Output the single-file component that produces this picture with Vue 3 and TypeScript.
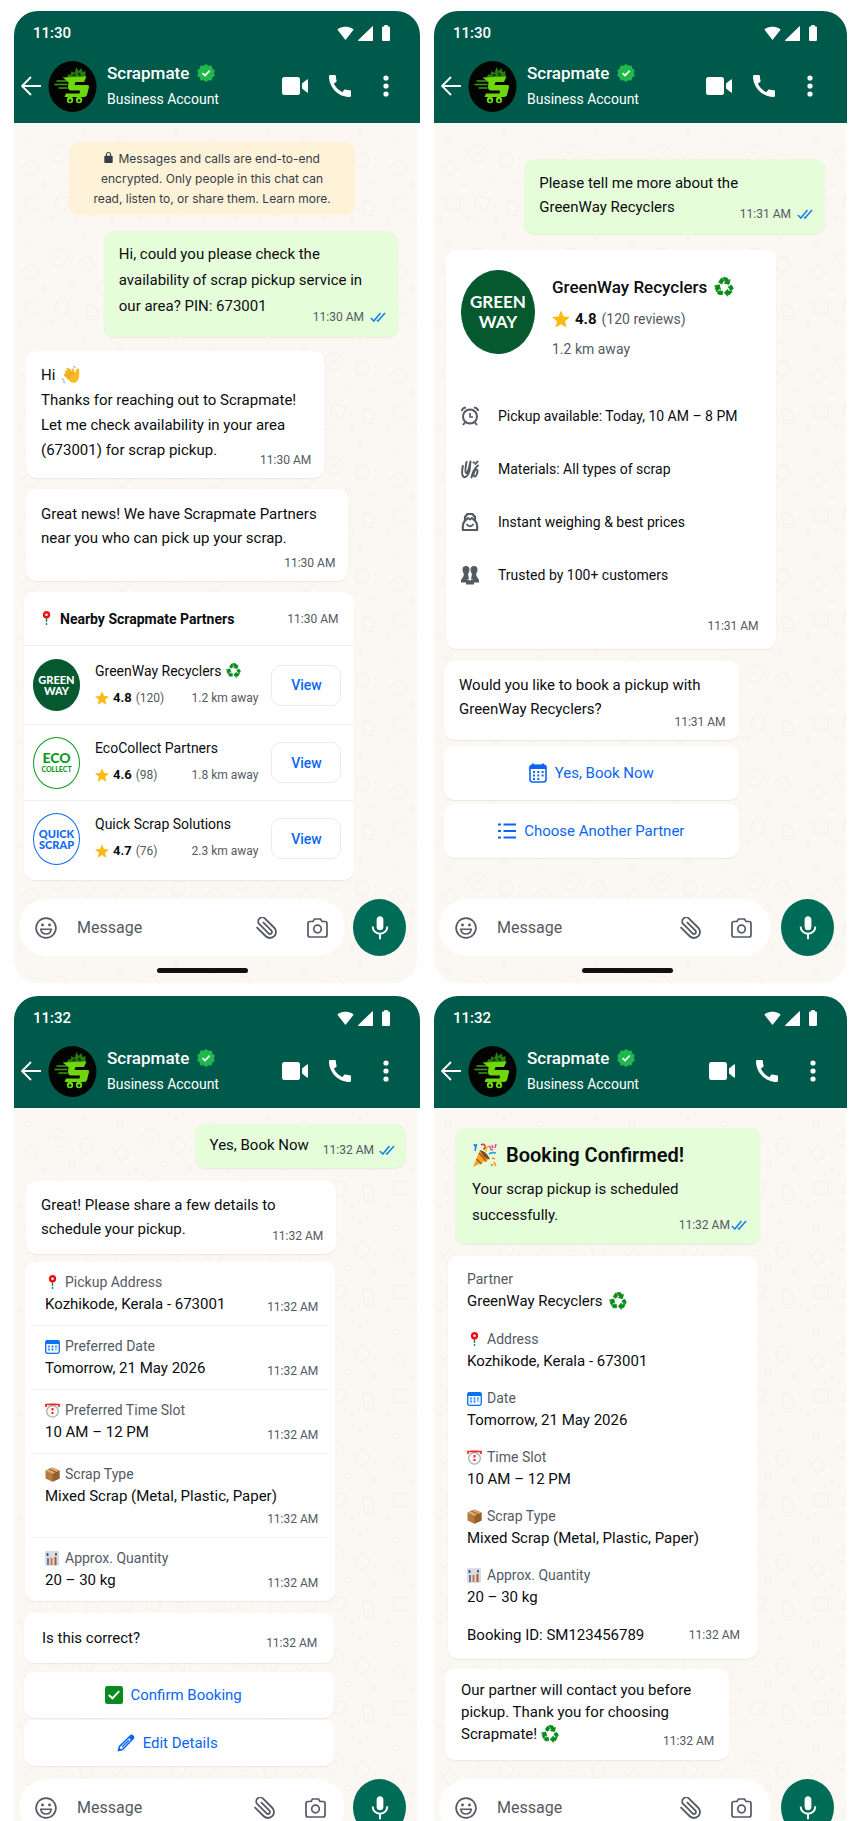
<script setup lang="ts">
interface Phone {
  id: string
  clock: string
}

interface Partner {
  name: string
  logo: string[]
  tone: string
  eco: boolean
  rating: string
  reviews: number
  distance: string
}

interface Field {
  icon: string
  label: string
  shortLabel: string
  value: string
  tall?: boolean
}

const phones: Phone[] = [
  { id: 'availability', clock: '11:30' },
  { id: 'partner', clock: '11:30' },
  { id: 'details', clock: '11:32' },
  { id: 'confirmed', clock: '11:32' },
]

const partners: Partner[] = [
  { name: 'GreenWay Recyclers', logo: ['GREEN', 'WAY'], tone: 'greenway', eco: true, rating: '4.8', reviews: 120, distance: '1.2 km away' },
  { name: 'EcoCollect Partners', logo: ['ECO', 'COLLECT'], tone: 'ecocollect', eco: false, rating: '4.6', reviews: 98, distance: '1.8 km away' },
  { name: 'Quick Scrap Solutions', logo: ['QUICK', 'SCRAP'], tone: 'quickscrap', eco: false, rating: '4.7', reviews: 76, distance: '2.3 km away' },
]

const features = [
  { icon: 'clock', text: 'Pickup available: Today, 10 AM – 8 PM' },
  { icon: 'materials', text: 'Materials: All types of scrap' },
  { icon: 'weigh', text: 'Instant weighing & best prices' },
  { icon: 'people', text: 'Trusted by 100+ customers' },
]

const fields: Field[] = [
  { icon: 'pin', label: 'Pickup Address', shortLabel: 'Address', value: 'Kozhikode, Kerala - 673001' },
  { icon: 'date', label: 'Preferred Date', shortLabel: 'Date', value: 'Tomorrow, 21 May 2026' },
  { icon: 'alarm', label: 'Preferred Time Slot', shortLabel: 'Time Slot', value: '10 AM – 12 PM' },
  { icon: 'box', label: 'Scrap Type', shortLabel: 'Scrap Type', value: 'Mixed Scrap (Metal, Plastic, Paper)', tall: true },
  { icon: 'chart', label: 'Approx. Quantity', shortLabel: 'Approx. Quantity', value: '20 – 30 kg' },
]
</script>

<template>
  <svg class="sprite" aria-hidden="true">
    <defs>
      <pattern id="doodles" width="92" height="104" patternUnits="userSpaceOnUse">
        <g fill="none" stroke="#f6f0ea" stroke-width="1">
          <circle cx="14" cy="16" r="3" /><circle cx="70" cy="10" r="2" /><circle cx="44" cy="30" r="9" />
          <path d="M40 28l3 3 5-4M8 44l10-6 6 8-9 7zM66 34q8-8 12 0t-6 12q-8-4-6-12z" />
          <circle cx="30" cy="62" r="2" /><circle cx="58" cy="56" r="3" /><circle cx="84" cy="60" r="2" />
          <path d="M12 74h14v12H12zM44 72l12 4-4 12-12-4zM72 78q10-2 12 8t-10 6z" />
          <circle cx="36" cy="96" r="3" /><circle cx="62" cy="98" r="2" /><circle cx="6" cy="98" r="2" />
        </g>
      </pattern>
      <symbol id="wifi" viewBox="0 3 24 19"><path fill="currentColor" d="M12 21.5 23.6 7C23.2 6.7 18.7 3 12 3S.8 6.7.4 7z" /></symbol>
      <symbol id="signal" viewBox="2 2 20 20"><path fill="currentColor" d="M3 22h18q1 0 1-1V3q0-1.500-1-.5L2.400 20.600Q1.500 22 3 22z" /></symbol>
      <symbol id="battery" viewBox="7 2 10 20"><path fill="currentColor" d="M15.500 4H14.500Q14.500 2 13.500 2h-3Q9.500 2 9.500 4h-1Q7 4 7 5.500v15Q7 22 8.500 22h7q1.500 0 1.500-1.500v-15Q17 4 15.500 4z" /></symbol>
      <symbol id="back" viewBox="0 0 20 20"><path d="M10 1 1 10l9 9M1 10h19" fill="none" stroke="currentColor" stroke-width="1.800" /></symbol>
      <symbol id="logo" viewBox="0 0 48 51">
        <ellipse cx="24" cy="25.500" rx="24" ry="25.500" fill="#020402" />
        <path d="M18 17l2-4 2 1 1-4 3 2 2-6 2 4 3-3 1 4 3-1v7z" fill="#2b7a0e" />
        <path d="M24 14h3m3-2 2 3" stroke="#0a2604" stroke-width="1.500" />
        <path d="M8 20h12M6 23.500h13M10 27h9" stroke="#3c9a12" stroke-width="1.600" />
        <path d="M14 16.500 38 15.500 35.500 21H27l-1 3h13q2 0 1.500 2l-2 8q-.5 2-3 2H16l1.500-3.500H31l.5-3H23q-3.500 0-3.500-3.500L20 21z" fill="#6fd80c" />
        <circle cx="21.500" cy="39" r="3.200" fill="#6fd80c" /><circle cx="30.500" cy="39" r="3.200" fill="#6fd80c" />
        <circle cx="21.500" cy="39.500" r="1.200" fill="#020402" /><circle cx="30.500" cy="39.500" r="1.200" fill="#020402" />
      </symbol>
      <symbol id="verified" viewBox="0 0 18 18">
        <path fill="#1fb84a" d="M9 0l2.500 1.700 3-.1 .9 2.900L17.800 6.300 16.900 9l.9 2.700-2.400 1.800-.9 2.900-3-.1L9 18l-2.500-1.700-3 .1-.9-2.900L.2 11.700 1.100 9 .2 6.300l2.400-1.800.9-2.900 3 .1z" />
        <path d="M5.500 9.200 8 11.500 12.700 6.700" fill="none" stroke="#fff" stroke-width="1.700" />
      </symbol>
      <symbol id="video" viewBox="0 0 26 18"><rect width="18" height="18" rx="2.500" fill="currentColor" /><path fill="currentColor" d="M20 6.500 25 2.500q1-.5 1 .5v12q0 1-1 .5l-5-4z" /></symbol>
      <symbol id="call" viewBox="3 3 18 18"><path fill="currentColor" d="M20.010 15.380c-1.230 0-2.420-.2-3.530-.56-.35-.12-.74-.03-1.010.24l-1.570 1.970c-2.830-1.350-5.480-3.900-6.890-6.830l1.950-1.660c.27-.28.35-.67.24-1.020-.37-1.110-.56-2.300-.56-3.530 0-.54-.45-.99-.99-.99H4.190C3.650 3 3 3.240 3 3.990 3 13.280 10.730 21 20.010 21c.71 0 .99-.63.99-1.180v-3.450c0-.54-.45-.99-.99-.99z" /></symbol>
      <symbol id="more" viewBox="0 0 6 22"><g fill="currentColor"><circle cx="3" cy="3" r="2.600" /><circle cx="3" cy="11" r="2.600" /><circle cx="3" cy="19" r="2.600" /></g></symbol>
      <symbol id="lock" viewBox="4 1 16 21"><path fill="currentColor" d="M18 8h-1V6c0-2.760-2.240-5-5-5S7 3.240 7 6v2H6c-1.100 0-2 .9-2 2v10c0 1.100.9 2 2 2h12c1.100 0 2-.9 2-2V10c0-1.100-.9-2-2-2zM9 8V6c0-1.660 1.340-3 3-3s3 1.340 3 3v2z" /></symbol>
      <symbol id="ticks" viewBox="0 0 16 10"><path d="M.8 6 3.800 9 10.500 1M7 8 8 9 15 1" fill="none" stroke="#1686e0" stroke-width="1.600" /></symbol>
      <symbol id="recycle" viewBox="0.500 1.500 22.500 22">
        <path fill="#0a8a17" stroke="#0a8a17" stroke-width=".9" d="M5.770 7.150 7.200 4.780l1.030-1.710c.39-.65 1.330-.65 1.720 0l1.480 2.460-1.230 2.060-1 1.620-3.430-2.060zm15.950 5.820-1.600-2.660-3.460 2L18.870 16H20c.76 0 1.450-.43 1.790-1.110.14-.28.21-.58.21-.89 0-.36-.1-.71-.28-1.030zM16 21h1.500c.76 0 1.450-.43 1.790-1.110L20.740 17H16v-2l-4 4 4 4v-2zm-6-4H5.700l-.84 1.410c-.3.5-.32 1.120-.06 1.650.28.57.87.94 1.520.94H10v-4zm-3.880-2.650 1.730 1.040L6.480 9.900 1 11.270l1.700 1.020-.41.69c-.35.59-.38 1.310-.07 1.920l1.630 3.260 2.270-3.810zm10.900-9.210-1.300-2.170C15.350 2.370 14.700 2 14 2h-3.530l3.120 5.200-1.720 1.030 5.490 1.370 1.370-5.490-1.710 1.030z" />
      </symbol>
      <symbol id="star" viewBox="2 2 20 19"><path fill="#fdb913" d="M12 17.300 18.200 21l-1.700-7L22 9.200l-7.200-.6L12 2 9.200 8.600 2 9.200 7.500 14l-1.700 7z" /></symbol>
      <symbol id="pin" viewBox="0 0 15 15"><path d="M7.500 7v8" stroke="#178a4c" stroke-width="1.400" stroke-dasharray="4 1 2 1" /><circle cx="7.500" cy="3.700" r="2.500" fill="#fff" stroke="#ee1111" stroke-width="2.400" /></symbol>
      <symbol id="wave" viewBox="0 0 18 18">
        <path fill="#fbb924" d="M3 6.500q-.8-1.400.3-1.900t1.900.6L4.600 3.600q-.5-1.400.6-1.800t1.900.8l3 4.200L9.400 3.700q0-1.300 1-1.300t1.300 1.200L13 7l1.500-3.500q.7-1.300 1.800-.8t1 2L17 11q-.2 3.500-3.200 5.200t-6-1L2 9.700q-.9-1.100 0-1.800t2 .2z" />
        <path d="M5 5.500 9 10M3.800 8l4 4M7 3l4 5.500" stroke="#d8860a" stroke-width=".7" fill="none" />
        <path d="M11 .5q2 0 2.500 1.500M.5 12q0 2.500 2.500 3.500M1 15.500 3 17.500" stroke="#7bb0d0" fill="none" />
      </symbol>
      <symbol id="party" viewBox="0 0 25 25">
        <path d="M1 24 8 7l10 9z" fill="#f4a62a" /><path d="M4.500 16l5 5M7 10l7.500 8.500" stroke="#b35a12" stroke-width="1.600" />
        <path d="M8 7q6 1 10 9-6 1-10-9z" fill="#7d4b22" />
        <path d="M2 1l2 4M4.500 1 3 8" stroke="#2b7de0" stroke-width="1.600" /><path d="M9 2q3-2 4 1t-2 3" stroke="#e0344b" stroke-width="1.600" fill="none" />
        <path d="M17 11q3-2 7-1" stroke="#27a8e0" stroke-width="1.800" fill="none" /><path d="M14 9q-1-4 3-6" stroke="#f1c40f" stroke-width="1.500" fill="none" />
        <path d="M17 3l2 2M20 2l1 3M24 1l-1 4M18 6l3 1" stroke="#e83f9b" stroke-width="1.500" /><path d="M20 15l3 1M22 19l2 4M19 21l2 2" stroke="#f08c1e" stroke-width="1.500" />
      </symbol>
      <symbol id="date" viewBox="0 0 15 15"><rect x=".7" y="1.700" width="13.600" height="12.600" rx="1.800" fill="#eef5ff" stroke="#0b73ee" stroke-width="1.300" /><path d="M.5 5V3Q.5 1 2.500 1h10q2 0 2 2v2z" fill="#0b73ee" /><path d="M4 6.500v6M7.500 6.500v6M11 6.500v4" stroke="#0b73ee" stroke-width="1.400" stroke-dasharray="2 1" /></symbol>
      <symbol id="alarm" viewBox="0 0 15 15"><circle cx="7.500" cy="8.300" r="5.800" fill="#fbfbfc" stroke="#a9aeb6" stroke-width="1.300" /><path d="M1 4V1.500h3M14 4V1.500h-3M4 1.300h7" stroke="#ef2626" stroke-width="1.700" fill="none" /><path d="M7.500 5v2.400M7.500 9v2" stroke="#ee1717" stroke-width="1.900" /></symbol>
      <symbol id="box" viewBox="0 0 15 15"><path d="M7.500.5 14.500 3.500v8l-7 3.200-7-3.200v-8z" fill="#b67a3e" /><path d="M7.500.5 14.500 3.500 7.500 7 .5 3.500z" fill="#dcaa6d" /><path d="M7.500 7v7.700l7-3.200v-8z" fill="#94602f" /><path d="M4 2l7 3.200v2" stroke="#8a5527" fill="none" /></symbol>
      <symbol id="chart" viewBox="0 0 15 15"><rect width="14" height="15" rx="1" fill="#d9dde3" /><path d="M2.500 2v3M11 2v2.500" stroke="#47525f" stroke-width="1.800" /><path d="M3 14V7" stroke="#5d7fa8" stroke-width="2" /><path d="M6.500 14V7" stroke="#e0702c" stroke-width="2" /><path d="M10.500 14V6" stroke="#a85a3e" stroke-width="2" /></symbol>
      <symbol id="clock" viewBox="0 0 18 20"><g fill="none" stroke="currentColor"><circle cx="9" cy="10.500" r="7" stroke-width="2" /><path d="M9 7v4h3" stroke-width="1.700" /><path d="M1 5q0-3 4-3.500M17 5q0-3-4-3.500M4 16.500 2 19M14 16.500l2 2.500" stroke-width="2" /></g></symbol>
      <symbol id="materials" viewBox="0 0 18 20"><g fill="none" stroke="currentColor" stroke-width="2" stroke-linecap="round"><path d="M1.800 7Q0 17 3 18t5.500-6L9.500 2.500M5.500 3q-2 10-.3 11t4.300-11.500M10.500 18.500q1.500-8 6.500-12M12.500 3.500h.6M16.500 2.500l-2 2.500" /><ellipse cx="14.500" cy="14" rx="1.600" ry="3.600" transform="rotate(18 14.500 14)" /></g></symbol>
      <symbol id="weigh" viewBox="0 0 18 20"><path d="M2 18q-1-6 2-9.500V5l2.500-3h5L14 5v3.500q3 3.500 2 9.500z" fill="none" stroke="currentColor" stroke-width="2.200" stroke-linejoin="round" /><path d="M4.500 8.500 7 6l2 1.500L11 6l2.500 2.500M5.500 12q3.500 4.500 7 0" fill="none" stroke="currentColor" stroke-width="1.800" /></symbol>
      <symbol id="people" viewBox="0 0 18 20"><g fill="currentColor"><path d="M1.500 4.500Q1.500 1 5 1t3.500 3.500Q8.500 7.500 7 9l1 5H6.500v3.500H0V15l2.300-3.500.7-2.500Q1.500 7.500 1.500 4.500z" /><path d="M16.500 4.500Q16.500 1 13 1T9.500 4.500Q9.500 7.500 11 9l-1 5h1.500v3.500H18V15l-2.300-3.500L15 9q1.500-1.500 1.500-4.500z" /><path d="M5 19.500v-4l3-1 1 1.500 1-1.500 3 1v4z" /></g></symbol>
      <symbol id="calendar" viewBox="0 0 18 20"><rect x="1" y="2.500" width="16" height="16.500" rx="2.500" fill="none" stroke="currentColor" stroke-width="1.600" /><path d="M.5 6V4q0-2.500 2.500-2.500V.5h2v1h8v-1h2v1q2.500 0 2.500 2.500v2z" fill="currentColor" /><path d="M4 9h11M4 12.500h11M4 16h8" stroke="currentColor" stroke-width="2" stroke-dasharray="2 2.300" /></symbol>
      <symbol id="list" viewBox="0 0 18 16"><path d="M0 1.500h3M0 8h3M0 14.500h3M5.500 1.500H18M5.500 8H18M5.500 14.500H18" stroke="currentColor" stroke-width="2.200" /></symbol>
      <symbol id="check" viewBox="0 0 19 19"><rect width="19" height="19" rx="2.500" fill="#0c8a22" /><path d="M4 9.500 7.800 13 15 5.500" fill="none" stroke="#fff" stroke-width="2" /></symbol>
      <symbol id="pencil" viewBox="0 0 18 18"><path d="M1.500 16.500 2.500 12.500 13.500 1.700q1-1 2.300.4t.4 2.400L5.500 15.500z" fill="none" stroke="currentColor" stroke-width="1.500" /><path d="M5 13 12 6" fill="none" stroke="currentColor" stroke-width="1.200" /><path fill="currentColor" d="M11.500 3.500 13.500 1.500q1-.8 2.400.5t.5 2.500l-2 2zM1 17l1-3.500L4.500 16z" /></symbol>
      <symbol id="smile" viewBox="0 0 22 22"><circle cx="11" cy="11" r="9.900" fill="none" stroke="currentColor" stroke-width="1.700" /><circle cx="7.500" cy="8" r="1.400" fill="currentColor" /><circle cx="14.500" cy="8" r="1.400" fill="currentColor" /><path d="M5.800 12.300h10.400q-.8 4.700-5.200 4.700t-5.200-4.700z" fill="none" stroke="currentColor" stroke-width="1.600" /></symbol>
      <symbol id="clip" viewBox="1 1 22 22"><path transform="matrix(-1 0 0 1 24 0)" d="M21.440 11.050l-9.190 9.190a6 6 0 0 1-8.490-8.490l9.190-9.190a4 4 0 0 1 5.660 5.660l-9.200 9.190a2 2 0 0 1-2.830-2.830l8.490-8.480" fill="none" stroke="currentColor" stroke-width="1.800" /></symbol>
      <symbol id="camera" viewBox="0 0 21 20"><path d="M3 3.500h3l1.500-2.500h6L15 3.500h3q2 0 2 2v11.500q0 2-2 2H3q-2 0-2-2V5.500q0-2 2-2z" fill="none" stroke="currentColor" stroke-width="1.700" /><circle cx="10.500" cy="11" r="3.800" fill="none" stroke="currentColor" stroke-width="1.700" /></symbol>
      <symbol id="mic" viewBox="4 1 16 21"><path fill="currentColor" d="M12 14c1.660 0 3-1.340 3-3V4.500c0-1.660-1.340-3-3-3s-3 1.340-3 3V11c0 1.660 1.340 3 3 3z" /><path d="M5.500 10.500c0 3.800 2.700 6.500 6.500 6.500s6.500-2.700 6.500-6.500M12 17v5" fill="none" stroke="currentColor" stroke-width="1.700" /></symbol>
    </defs>
  </svg>

  <div class="board">
    <section v-for="phone in phones" :key="phone.id" class="phone" :class="phone.id">
      <header class="top">
        <div class="status">
          <time>{{ phone.clock }}</time>
          <span class="status-icons">
            <svg class="wifi"><use href="#wifi" /></svg>
            <svg class="signal"><use href="#signal" /></svg>
            <svg class="battery"><use href="#battery" /></svg>
          </span>
        </div>
        <div class="toolbar">
          <button class="icon-btn" type="button" aria-label="Back"><svg class="i20"><use href="#back" /></svg></button>
          <svg class="avatar"><use href="#logo" /></svg>
          <div class="who">
            <h2>Scrapmate <svg class="i18"><use href="#verified" /></svg></h2>
            <p>Business Account</p>
          </div>
          <button class="icon-btn" type="button" aria-label="Video call"><svg class="video"><use href="#video" /></svg></button>
          <button class="icon-btn call" type="button" aria-label="Call"><svg class="i22"><use href="#call" /></svg></button>
          <button class="icon-btn" type="button" aria-label="More options"><svg class="more"><use href="#more" /></svg></button>
        </div>
      </header>

      <div class="body">
        <svg class="wallpaper" aria-hidden="true"><rect width="100%" height="100%" fill="url(#doodles)" /></svg>

        <main class="chat">
          <template v-if="phone.id === 'availability'">
            <p class="notice">
              <svg class="lock"><use href="#lock" /></svg> Messages and calls are end-to-end<br />encrypted. Only people in this chat can<br />read, listen to, or share them. Learn more.
            </p>
            <div class="bubble out ask">
              <p>Hi, could you please check the<br />availability of scrap pickup service in<br />our area? PIN: 673001</p>
              <span class="meta">11:30 AM <svg class="ticks"><use href="#ticks" /></svg></span>
            </div>
            <div class="bubble hello">
              <p>Hi <svg class="i18 emoji hand"><use href="#wave" /></svg><br />Thanks for reaching out to Scrapmate!<br />Let me check availability in your area<br />(673001) for scrap pickup.</p>
              <span class="meta">11:30 AM</span>
            </div>
            <div class="bubble news">
              <p>Great news! We have Scrapmate Partners<br />near you who can pick up your scrap.</p>
              <span class="meta">11:30 AM</span>
            </div>
            <div class="card nearby">
              <div class="nearby-head">
                <svg class="i15"><use href="#pin" /></svg>
                <h3>Nearby Scrapmate Partners</h3>
                <span class="meta">11:30 AM</span>
              </div>
              <ul>
                <li v-for="p in partners" :key="p.name">
                  <span class="brand" :class="p.tone"><b v-for="line in p.logo" :key="line">{{ line }}</b></span>
                  <div class="info">
                    <h4>{{ p.name }} <svg v-if="p.eco" class="i15"><use href="#recycle" /></svg></h4>
                    <p><svg class="star"><use href="#star" /></svg><b>{{ p.rating }}</b> ({{ p.reviews }})<span class="distance">{{ p.distance }}</span></p>
                  </div>
                  <button type="button" class="view">View</button>
                </li>
              </ul>
            </div>
          </template>

          <template v-else-if="phone.id === 'partner'">
            <div class="bubble out tell">
              <p>Please tell me more about the<br />GreenWay Recyclers</p>
              <span class="meta">11:31 AM <svg class="ticks"><use href="#ticks" /></svg></span>
            </div>
            <div class="card profile">
              <div class="profile-head">
                <span class="brand greenway large"><b>GREEN</b><b>WAY</b></span>
                <div>
                  <h3>GreenWay Recyclers <svg class="i20"><use href="#recycle" /></svg></h3>
                  <p><svg class="i18"><use href="#star" /></svg><b>4.8</b> (120 reviews)</p>
                  <p>1.2 km away</p>
                </div>
              </div>
              <ul>
                <li v-for="f in features" :key="f.icon"><svg class="feature"><use :href="'#' + f.icon" /></svg>{{ f.text }}</li>
              </ul>
              <span class="meta">11:31 AM</span>
            </div>
            <div class="bubble would">
              <p>Would you like to book a pickup with<br />GreenWay Recyclers?</p>
              <span class="meta">11:31 AM</span>
            </div>
            <button type="button" class="reply"><svg class="calendar"><use href="#calendar" /></svg>Yes, Book Now</button>
            <button type="button" class="reply"><svg class="i18"><use href="#list" /></svg>Choose Another Partner</button>
          </template>

          <template v-else-if="phone.id === 'details'">
            <div class="bubble out yes">
              <p>Yes, Book Now</p>
              <span class="meta">11:32 AM <svg class="ticks"><use href="#ticks" /></svg></span>
            </div>
            <div class="bubble share">
              <p>Great! Please share a few details to<br />schedule your pickup.</p>
              <span class="meta">11:32 AM</span>
            </div>
            <dl class="card form">
              <div v-for="f in fields" :key="f.icon" :class="{ tall: f.tall }">
                <dt><svg class="i15"><use :href="'#' + f.icon" /></svg>{{ f.label }}</dt>
                <dd>{{ f.value }}</dd>
                <dd class="meta">11:32 AM</dd>
              </div>
            </dl>
            <div class="bubble correct">
              <p>Is this correct?</p>
              <span class="meta">11:32 AM</span>
            </div>
            <button type="button" class="reply"><svg class="i18"><use href="#check" /></svg>Confirm Booking</button>
            <button type="button" class="reply edit"><svg class="i18"><use href="#pencil" /></svg>Edit Details</button>
          </template>

          <template v-else>
            <div class="bubble out done">
              <div>
                <h3><svg class="party"><use href="#party" /></svg>Booking Confirmed!</h3>
                <p>Your scrap pickup is scheduled<br />successfully.</p>
              </div>
              <span class="meta tight">11:32 AM<svg class="ticks"><use href="#ticks" /></svg></span>
            </div>
            <div class="card summary">
              <dl>
                <div>
                  <dt>Partner</dt>
                  <dd>GreenWay Recyclers <svg class="i18"><use href="#recycle" /></svg></dd>
                </div>
                <div v-for="f in fields" :key="f.icon">
                  <dt><svg class="i15"><use :href="'#' + f.icon" /></svg>{{ f.shortLabel }}</dt>
                  <dd>{{ f.value }}</dd>
                </div>
              </dl>
              <p class="booking">Booking ID: SM123456789<span class="meta">11:32 AM</span></p>
            </div>
            <div class="bubble thanks">
              <p>Our partner will contact you before<br />pickup. Thank you for choosing<br />Scrapmate! <svg class="i18 emoji"><use href="#recycle" /></svg></p>
              <span class="meta">11:32 AM</span>
            </div>
          </template>
        </main>

        <form class="composer" @submit.prevent>
          <div class="field">
            <button class="icon-btn" type="button" aria-label="Emoji"><svg class="i22"><use href="#smile" /></svg></button>
            <input type="text" placeholder="Message" aria-label="Message" />
            <button class="icon-btn" type="button" aria-label="Attach"><svg class="i22"><use href="#clip" /></svg></button>
            <button class="icon-btn" type="button" aria-label="Camera"><svg class="camera"><use href="#camera" /></svg></button>
          </div>
          <button class="mic" type="button" aria-label="Record voice message"><svg><use href="#mic" /></svg></button>
        </form>
        <div class="home"></div>
      </div>
    </section>
  </div>
</template>

<style>
body {
  background: #fefefe;
}
</style>

<style scoped>
* {
  box-sizing: border-box;
  margin: 0;
  padding: 0;
}

.sprite {
  position: absolute;
  width: 0;
  height: 0;
}

.board {
  display: grid;
  grid-template-columns: 58fr 59fr;
  gap: 13px 14px;
  padding: 11px 17px 0 14px;
  max-height: 100vh;
  overflow: hidden;
  font: 450 15px/24px Roboto, "Liberation Sans", sans-serif;
  color: #0b0d0f;
}

.phone {
  display: flex;
  flex-direction: column;
  min-width: 0;
}

button,
input {
  font: inherit;
  border: 0;
  background: none;
}

ul {
  list-style: none;
}

svg {
  flex: none;
}

.i15 { width: 15px; height: 15px; }
.i18 { width: 18px; height: 18px; }
.i20 { width: 20px; height: 20px; }
.i22 { width: 22px; height: 22px; }

/* Header */
.top {
  height: 112px;
  border-radius: 24px 24px 0 0;
  background: #005a4b;
  color: #fff;
}

.status {
  display: flex;
  justify-content: space-between;
  align-items: center;
  height: 44px;
  padding: 0 29px 0 19px;
  font-size: 15px;
  font-weight: 500;
}

.status-icons {
  display: flex;
  align-items: center;
  gap: 4px;
}

.wifi { width: 17px; height: 15px; }
.signal { width: 15px; height: 15px; }
.battery { width: 10px; height: 16px; margin-left: 4px; }

.toolbar {
  display: flex;
  align-items: center;
  height: 62px;
  padding: 0 31px 0 7px;
}

.partner .toolbar {
  padding-right: 34px;
}

.icon-btn {
  display: flex;
  color: inherit;
}

.avatar {
  width: 49px;
  height: 51px;
  margin-left: 7px;
}

.who {
  flex: 1;
  margin-left: 10px;
}

.who h2 {
  display: flex;
  align-items: center;
  gap: 8px;
  font-size: 17px;
  font-weight: 500;
  line-height: 26px;
}

.who p {
  font-size: 14px;
  line-height: 26px;
}

.video { width: 26px; height: 18px; }
.call { margin: 0 32px 0 21px; }
.more { width: 6px; height: 22px; }

/* Conversation */
.body {
  position: relative;
  flex: 1;
  display: flex;
  flex-direction: column;
  margin-right: 3px;
  overflow: hidden;
  border-radius: 0 0 24px 24px;
  background: #fbf8f4;
}

.partner .body,
.confirmed .body {
  margin-right: 1px;
}

.wallpaper {
  position: absolute;
  inset: 0;
  width: 100%;
  height: 100%;
}

.chat {
  position: relative;
  flex: 1;
  display: flex;
  flex-direction: column;
  align-items: flex-start;
}

.notice {
  width: 71%;
  margin: 19px 0 0 55px;
  padding: 7px 0 6px;
  border-radius: 9px;
  background: #fef2d8;
  color: #373d45;
  font: 400 12px/20px Inter, Roboto, sans-serif;
  text-align: center;
}

.lock {
  width: 9px;
  height: 11px;
  margin-right: 2px;
}

.bubble,
.card,
.reply {
  border-radius: 10px;
  background: #fff;
  box-shadow: 0 1px 1px #ece7e1;
}

.bubble {
  display: grid;
  margin-left: 12px;
  padding: 12px 13px 10px 15px;
}

.bubble > * {
  grid-area: 1 / 1;
}

.meta {
  align-self: end;
  justify-self: end;
  display: flex;
  align-items: center;
  gap: 6px;
  color: #545a64;
  font-size: 12px;
  font-weight: 400;
  line-height: 16px;
  white-space: nowrap;
}

.meta.tight {
  gap: 1px;
}

.ticks { width: 16px; height: 10px; }

.emoji {
  vertical-align: -4px;
}

.hand {
  margin-left: 3px;
}

.out {
  align-self: flex-end;
  background: #e6fdda;
}

.ask {
  width: 73%;
  margin: 16px 19px 0 0;
  padding: 10px 12px 12px 15px;
  line-height: 26px;
}

.ask p { padding-bottom: 6px; }

.hello {
  width: 74%;
  margin-top: 14px;
  line-height: 25px;
}

.hello p { padding-bottom: 5px; }

.news {
  width: 80%;
  margin-top: 11px;
  padding-top: 13px;
}

.news p { padding-bottom: 21px; }

.nearby {
  width: 82%;
  margin: 11px 0 0 10px;
  padding-bottom: 4px;
}

.nearby-head {
  display: flex;
  align-items: center;
  height: 53px;
  padding: 0 16px 0 15px;
}

.nearby-head h3 {
  flex: 1;
  margin-left: 6px;
  font-size: 14px;
  font-weight: 700;
}

.nearby-head .meta {
  align-self: center;
}

.nearby li {
  display: flex;
  align-items: center;
  height: 76px;
  padding: 0 13px 0 9px;
  border-top: 1px solid #eceff1;
}

.nearby li:first-child {
  height: 79px;
}

.brand {
  display: flex;
  flex-direction: column;
  align-items: center;
  justify-content: center;
  width: 47px;
  height: 52px;
  border: 1px solid;
  border-radius: 50%;
  font: 700 11px/11px Lato, "Liberation Sans", sans-serif;
}

.greenway {
  border-color: #06592f;
  background: #06592f;
  color: #fff;
}

.ecocollect { color: #0d9a1f; }
.ecocollect b:first-child { font-size: 14px; line-height: 12px; }
.ecocollect b:last-child { font-size: 7px; line-height: 10px; }
.quickscrap { color: #0b6cf0; }

.brand.large {
  width: 74px;
  height: 84px;
  font-size: 17px;
  line-height: 20px;
}

.info {
  flex: 1;
  margin: 0 13px 0 15px;
  padding-bottom: 3px;
}

.info h4 {
  display: flex;
  align-items: center;
  gap: 4px;
  font-size: 14px;
  font-weight: 400;
  line-height: 28px;
}

.info p {
  display: flex;
  align-items: center;
  gap: 4px;
  color: #545a64;
  font-size: 12px;
  line-height: 26px;
}

.info b,
.profile b {
  color: #0b0d0f;
  font-weight: 700;
}

.info b {
  font-size: 13px;
}

.brand b {
  color: inherit !important;
}

.star { width: 14px; height: 14px; }
.distance { margin-left: auto; }

.view {
  width: 70px;
  height: 41px;
  border: 1px solid #e8ebf3;
  border-radius: 10px;
  color: #0a66f2;
  font-size: 14px;
  font-weight: 500;
}

/* Partner profile */
.tell {
  width: 73%;
  margin: 36px 21px 0 0;
  padding: 12px 12px 12px 15px;
}

.tell p { padding-bottom: 3px; }

.profile {
  display: flex;
  flex-direction: column;
  width: 80%;
  margin: 16px 0 0 12px;
  padding: 20px 17px 15px 15px;
}

.profile-head {
  display: flex;
  gap: 17px;
}

.profile h3 {
  display: flex;
  align-items: center;
  gap: 7px;
  font-size: 17px;
  font-weight: 500;
  line-height: 34px;
}

.profile p {
  display: flex;
  align-items: center;
  gap: 5px;
  color: #545a64;
  font-size: 14px;
  line-height: 30px;
}

.profile p b {
  font-size: 15px;
}

.profile ul {
  padding: 25px 0 17px;
}

.profile li {
  display: flex;
  align-items: center;
  gap: 19px;
  height: 53px;
  font-size: 14px;
}

.feature {
  width: 18px;
  height: 20px;
  color: #545a64;
}

.would {
  width: 71.5%;
  margin: 12px 0 6px 10px;
}

.would p { padding-bottom: 9px; }

.reply {
  display: flex;
  align-items: center;
  justify-content: center;
  gap: 8px;
  width: 71.5%;
  height: 54px;
  margin: 0 0 4px 10px;
  color: #0a66f2;
}

.calendar { width: 18px; height: 20px; }

/* Detail request */
.yes {
  display: flex;
  gap: 14px;
  margin: 16px 11px 0 0;
  padding: 9px 11px 11px 15px;
}

.yes .meta {
  gap: 5px;
  margin-bottom: -1px;
}

.share {
  width: 77%;
  margin: 13px 0 8px 12px;
}

.share p { padding-bottom: 3px; }

.form {
  width: 77%;
  margin-left: 11px;
}

.form div {
  display: grid;
  grid-template-columns: 1fr auto;
  margin: 0 7px 0 6px;
  padding: 9px 10px 10px 14px;
  border-bottom: 1px solid #f1f1f1;
}

.form div:last-child {
  border: 0;
}

dt {
  display: flex;
  align-items: center;
  gap: 5px;
  color: #545a64;
  font-size: 14px;
  font-weight: 400;
  line-height: 22px;
}

dd {
  line-height: 22px;
}

.form dt,
.form .tall dd {
  grid-column: 1 / -1;
}

.form .tall .meta {
  margin-top: 4px;
}

.correct {
  width: 77%;
  margin: 12px 0 9px 10px;
  padding: 13px 17px 12px 15px;
}

.correct p { padding: 0 0 1px 3px; }

.details .reply {
  width: 77%;
  height: 46px;
  margin-bottom: 2px;
  padding-right: 12px;
}

.details .edit {
  padding-right: 24px;
}

/* Confirmation */
.done {
  align-self: flex-start;
  width: 74%;
  margin: 20px 0 0 21px;
  padding: 10px 13px 11px 17px;
  line-height: 26px;
}

.done p { padding-bottom: 5px; }

.done h3 {
  display: flex;
  align-items: center;
  gap: 9px;
  margin-bottom: 4px;
  font-size: 20px;
  font-weight: 600;
  line-height: 34px;
}

.party { width: 25px; height: 25px; }

.summary {
  width: 75%;
  margin: 12px 0 0 14px;
  padding: 12px 17px 12px 19px;
}

.summary dl div {
  height: 59px;
}

.summary dl div:first-child {
  height: 60px;
}

.summary dd {
  display: flex;
  align-items: center;
  gap: 6px;
}

.booking {
  display: flex;
  justify-content: space-between;
  align-items: center;
}

.summary .meta {
  align-self: center;
}

.thanks {
  width: 69%;
  margin: 10px 0 0 11px;
  padding: 10px 15px 11px 16px;
  line-height: 22px;
}

.thanks p { padding-bottom: 4px; }

/* Composer */
.composer {
  position: relative;
  display: flex;
  gap: 8px;
  height: 57px;
  margin: 19px 11px 0 5px;
}

.details .composer {
  margin-top: 8px;
}

.field {
  flex: 1;
  display: flex;
  align-items: center;
  min-width: 0;
  padding: 0 17px 0 16px;
  border-radius: 29px;
  background: #fff;
  color: #545a64;
}

.partner .field,
.details .field,
.confirmed .field {
  padding-right: 19px;
}

.partner .composer,
.confirmed .composer {
  gap: 10px;
  margin-right: 12px;
}

.field input {
  flex: 1;
  min-width: 0;
  margin: 0 20px;
  color: #545a64;
  font-size: 16px;
  font-weight: 400;
  outline: 0;
}

.field input::placeholder {
  color: #545a64;
  opacity: 1;
}

.camera {
  width: 21px;
  height: 20px;
  margin-left: 30px;
}

.mic {
  display: flex;
  align-items: center;
  justify-content: center;
  width: 53px;
  border-radius: 50%;
  background: #006b57;
  color: #fff;
}

.mic svg { width: 18px; height: 25px; }

.home {
  position: relative;
  align-self: center;
  width: 91px;
  height: 5px;
  margin: 12px 26px 10px 0;
  border-radius: 3px;
  background: #101112;
}
</style>
